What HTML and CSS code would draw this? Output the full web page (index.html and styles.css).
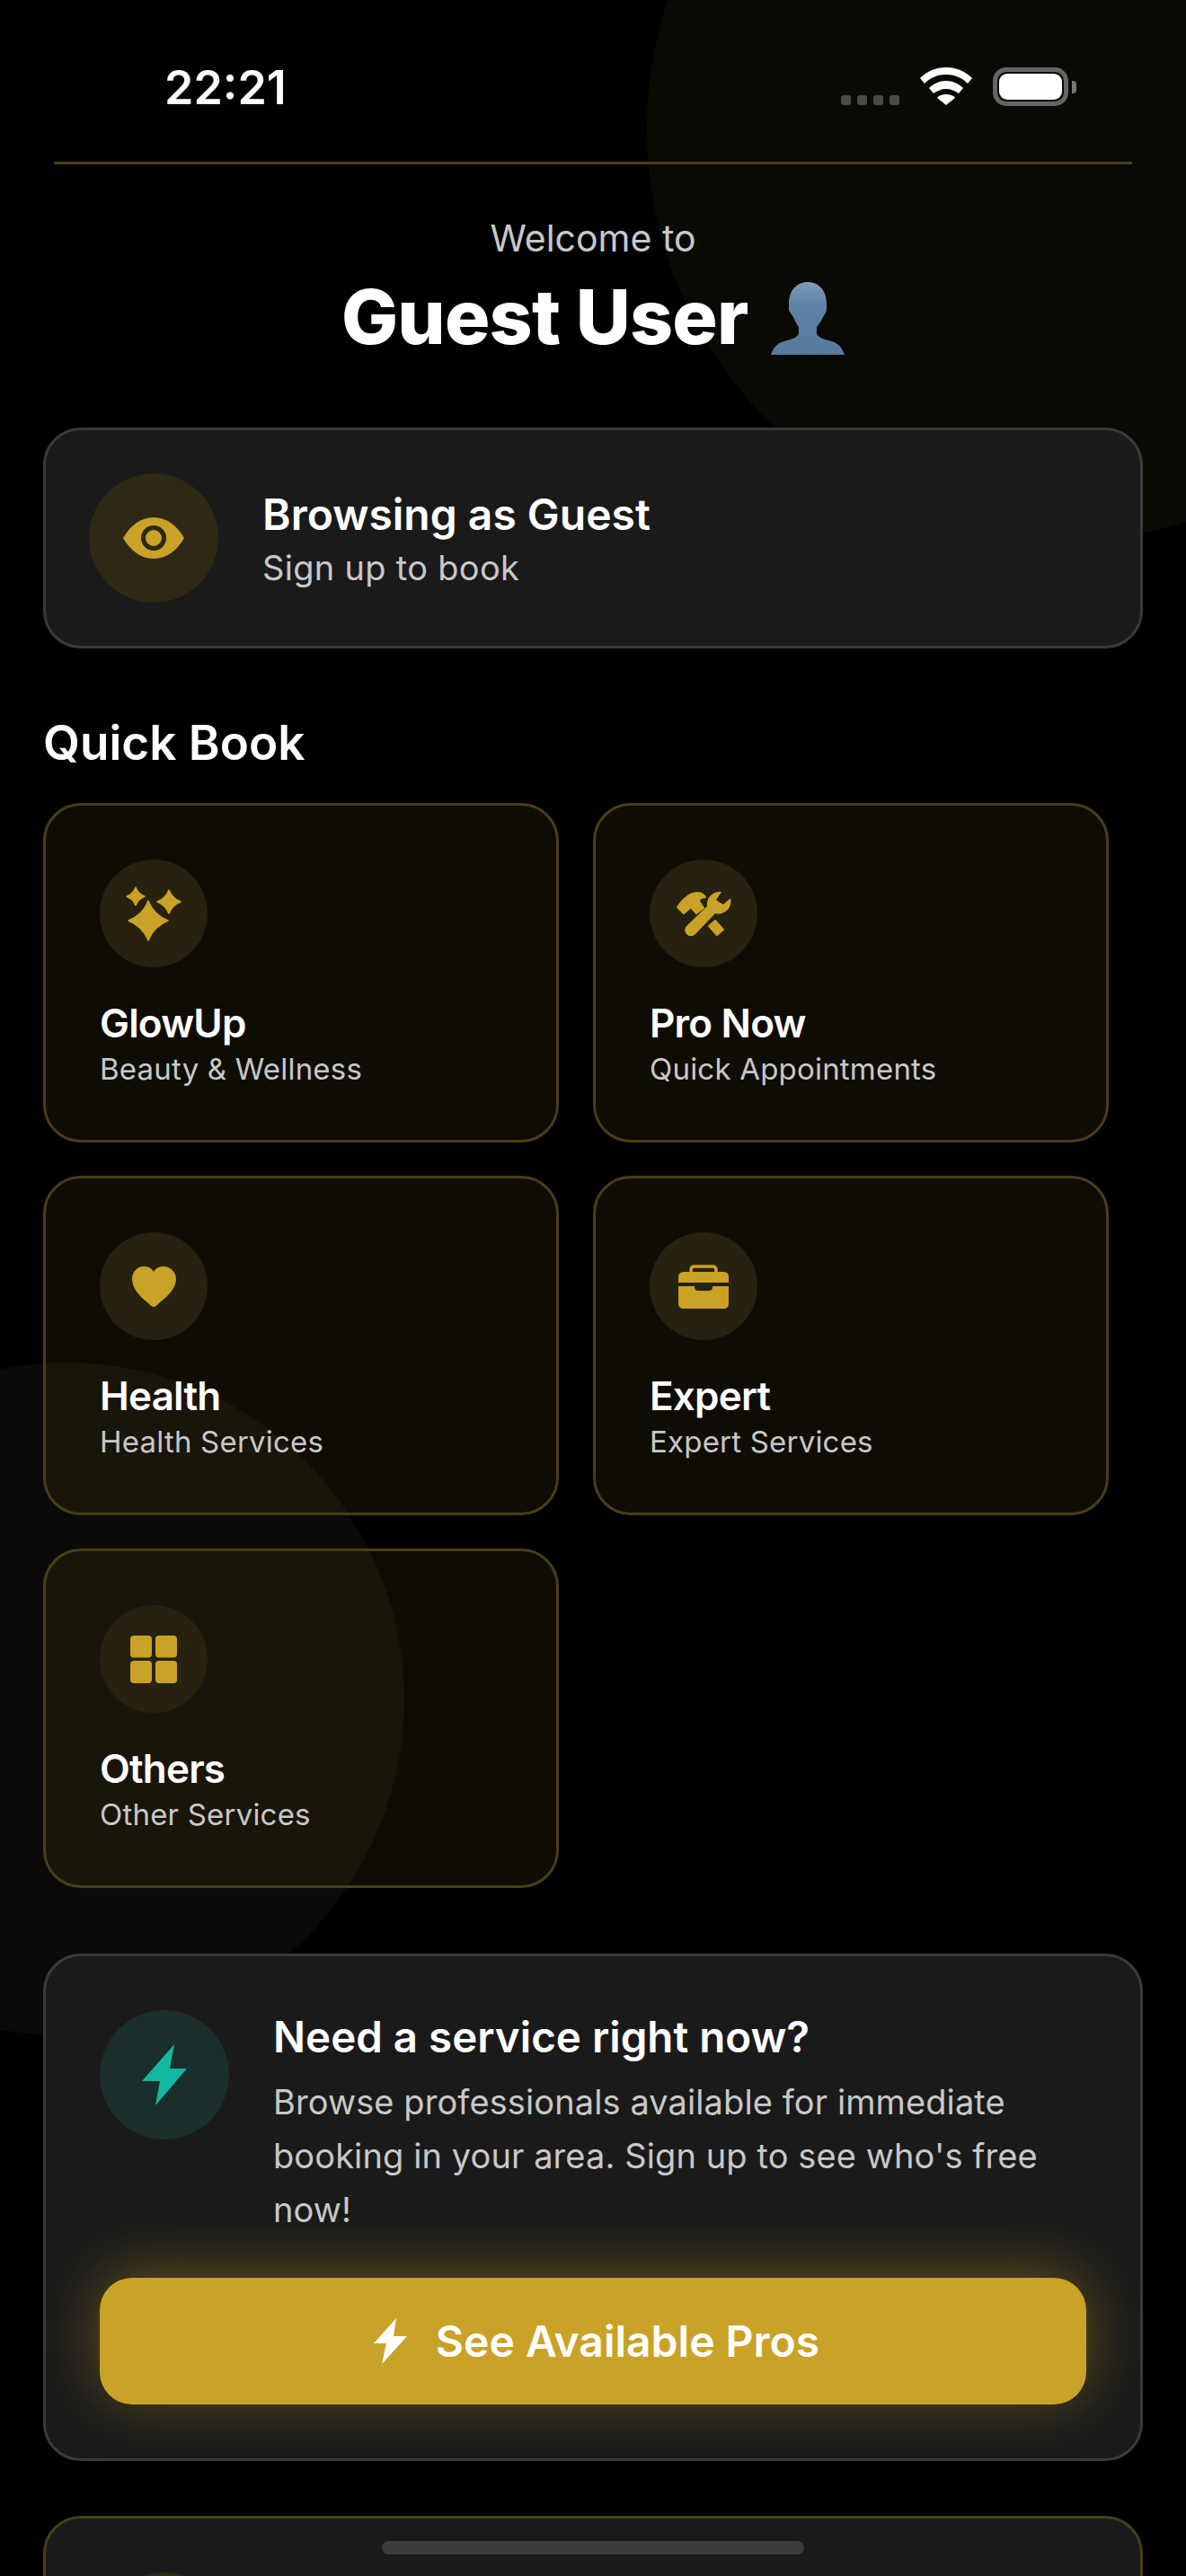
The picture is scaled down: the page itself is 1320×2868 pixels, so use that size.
FILE: index.html
```html
<!DOCTYPE html>
<html lang="en">
<head>
    <meta charset="UTF-8">
    <meta name="viewport" content="width=device-width, initial-scale=1.0">
    <title>Guest User</title>
    <link rel="stylesheet" href="styles.css">
</head>
<body>
    <div class="screen">
        <div class="blob blob-top"></div>
        <div class="blob blob-left"></div>

        <!-- Status bar -->
        <div class="status-bar">
            <span class="time">22:21</span>
            <div class="status-icons">
                <div class="signal"><i></i><i></i><i></i><i></i></div>
                <svg class="wifi" width="58" height="42" viewBox="0 0 58 42">
                    <path fill="#fff" d="M29 0C18 0 8 4 0 12l5 6C12 11 20 8 29 8s17 3 24 10l5-6C50 4 40 0 29 0z"/>
                    <path fill="#fff" d="M29 15c-7 0-14 3-19 8l5 6c4-3 9-5 14-5s10 2 14 5l5-6c-5-5-12-8-19-8z"/>
                    <path fill="#fff" d="M29 30c-4 0-8 1-10 4l10 8 10-8c-2-3-6-4-10-4z"/>
                </svg>
                <div class="battery"><div class="battery-level"></div></div>
                <div class="battery-nub"></div>
            </div>
        </div>

        <div class="welcome">
            <p>Welcome to</p>
            <h1>Guest User
                <svg class="bust" width="82" height="83" viewBox="0 0 82 83">
                    <defs>
                        <linearGradient id="bustFill" x1="0" y1="0" x2="0" y2="1">
                            <stop offset="0" stop-color="#7d9cb8"/>
                            <stop offset="0.3" stop-color="#5f84a8"/>
                            <stop offset="1" stop-color="#567a9c"/>
                        </linearGradient>
                    </defs>
                    <path fill="url(#bustFill)" d="M41 0C29 0 20 9 20 24l0 7c2 5 5 7 6 10 2 5 4 8 5 9l0 7c0 3-5 6-13 8C8 67 3 72 0 81l82 0c-3-9-8-14-18-16-8-2-13-5-13-8l0-7c2-3 5-6 6-9 1-3 4-5 5-10l0-7C62 9 53 0 41 0z"/>
                </svg>
            </h1>
        </div>

        <!-- Guest card -->
        <div class="guest-card">
            <div class="guest-icon">
                <svg width="144" height="144" viewBox="0 0 144 144">
                    <path fill="#c9a227" d="M38 72C46 58 58 49 72 49s26 9 34 23c-8 14-20 23-34 23S46 86 38 72z"/>
                    <circle cx="72" cy="72" r="11.5" fill="none" stroke="#2e2814" stroke-width="5"/>
                </svg>
            </div>
            <div class="guest-text">
                <div class="guest-title">Browsing as Guest</div>
                <div class="guest-sub">Sign up to book</div>
            </div>
        </div>

        <h2 class="section-title">Quick Book</h2>

        <div class="tile-grid">
            <div class="tile">
                <div class="tile-icon">
                    <svg width="120" height="120" viewBox="0 0 120 120" fill="#c9a227" stroke="#c9a227" stroke-width="1.5" stroke-linejoin="round">
                        <path d="M54 46C58.4 57 65 63.6 76 68 65 72.4 58.4 79 54 90 49.6 79 43 72.4 32 68 43 63.6 49.6 57 54 46z"/>
                        <path d="M40 31C42 36 45 39 50 41 45 43 42 46 40 51 38 46 35 43 30 41 35 39 38 36 40 31z"/>
                        <path d="M77 34C79.6 40.5 83.5 44.4 90 47 83.5 49.6 79.6 53.5 77 60 74.4 53.5 70.5 49.6 64 47 70.5 44.4 74.4 40.5 77 34z"/>
                    </svg>
                </div>
                <div class="tile-title">GlowUp</div>
                <div class="tile-sub">Beauty &amp; Wellness</div>
            </div>
            <div class="tile">
                <div class="tile-icon">
                    <svg width="120" height="120" viewBox="0 0 120 120" fill="#c9a227">
                        <path stroke="#c9a227" stroke-width="2" stroke-linejoin="round" d="M31 53Q42 37 53 37 59 37 62 42 56 42 55 46L60 54 52 60 46 53 38 60z"/>
                        <path stroke="#c9a227" stroke-width="2" stroke-linejoin="round" d="M73 68L66 74 75 84 82 78z"/>
                        <path d="M80 36A14 14 0 0 0 64 52L41 74A6.5 6.5 0 0 0 51 83L73 60A14 14 0 0 0 90 43L82 50 74 45z"/>
                    </svg>
                </div>
                <div class="tile-title">Pro Now</div>
                <div class="tile-sub">Quick Appointments</div>
            </div>
            <div class="tile">
                <div class="tile-icon">
                    <svg width="120" height="120" viewBox="0 0 120 120">
                        <path fill="#c9a227" d="M60 83C58 83 56 81 53 78 44 71 36 62 36 52 36 44 42 38 49 38 54 38 58 40 60 44 62 40 66 38 71 38 78 38 85 44 85 52 85 62 76 71 67 78 64 81 62 83 60 83z"/>
                    </svg>
                </div>
                <div class="tile-title">Health</div>
                <div class="tile-sub">Health Services</div>
            </div>
            <div class="tile">
                <div class="tile-icon">
                    <svg width="120" height="120" viewBox="0 0 120 120" fill="#c9a227">
                        <path fill="none" stroke="#c9a227" stroke-width="3.5" d="M46 45V42Q46 38 50 38H70Q74 38 74 42V45"/>
                        <path d="M38 44H82Q88 44 88 50V56H32V50Q32 44 38 44z"/>
                        <path d="M32 60H50V61Q50 65 54 65H66Q70 65 70 61V60H88V79Q88 85 82 85H38Q32 85 32 79z"/>
                    </svg>
                </div>
                <div class="tile-title">Expert</div>
                <div class="tile-sub">Expert Services</div>
            </div>
            <div class="tile">
                <div class="tile-icon">
                    <svg width="120" height="120" viewBox="0 0 120 120" fill="#c9a227">
                        <rect x="34" y="34" width="24" height="24.5" rx="4"/>
                        <rect x="62" y="34" width="24" height="24.5" rx="4"/>
                        <rect x="34" y="62" width="24" height="25" rx="4"/>
                        <rect x="62" y="62" width="24" height="25" rx="4"/>
                    </svg>
                </div>
                <div class="tile-title">Others</div>
                <div class="tile-sub">Other Services</div>
            </div>
        </div>

        <!-- Need a service -->
        <div class="now-card">
            <div class="now-row">
                <div class="now-icon">
                    <svg width="144" height="144" viewBox="0 0 144 144">
                        <path fill="#14b8a0" d="M83 38L47 79H67L62 106 97 65H78z"/>
                    </svg>
                </div>
                <div class="now-text">
                    <div class="now-title">Need a service right now?</div>
                    <p>Browse professionals available for immediate booking in your area. Sign up to see who's free now!</p>
                </div>
            </div>
            <button class="btn-gold">
                <svg width="37" height="51" viewBox="0 0 37 51">
                    <path fill="#fff" d="M25 0L0 28H14L9 51 37 20H22z"/>
                </svg>
                See Available Pros
            </button>
        </div>

        <div class="next-card">
            <div class="next-icon"></div>
        </div>

        <div class="home-bar"></div>
    </div>
</body>
</html>
```

FILE: styles.css
```css
* {
    margin: 0;
    padding: 0;
    box-sizing: border-box;
}

body {
    font-family: Inter, 'Noto Sans', sans-serif;
    background: #000;
    color: #fff;
}

.screen {
    position: relative;
    width: 1320px;
    height: 2868px;
    overflow: hidden;
    padding: 0 48px;
}

.blob {
    position: absolute;
    border-radius: 50%;
}

.blob-top {
    width: 920px;
    height: 920px;
    left: 720px;
    top: -317px;
    background: #0a0904;
}

.blob-left {
    width: 750px;
    height: 750px;
    left: -300px;
    top: 1517px;
    background: #0b0a08;
}

.status-bar,
.welcome,
.guest-card,
.section-title,
.tile-grid,
.now-card,
.next-card {
    position: relative;
}

.status-bar {
    height: 183px;
    margin: 0 12px;
    padding: 0 62px 0 123px;
    border-bottom: 3px solid #4a3d18;
    display: flex;
    justify-content: space-between;
}

.time {
    font-size: 52px;
    font-weight: 600;
    line-height: 62px;
    margin-top: 67px;
}

.status-icons {
    display: flex;
    align-items: flex-start;
    padding-top: 75px;
}

.signal {
    display: flex;
    gap: 7px;
    margin: 31px 23px 0 0;
}

.signal i {
    width: 11px;
    height: 11px;
    border-radius: 3px;
    background: #4a4a4a;
}

.battery {
    width: 84px;
    height: 43px;
    margin-left: 23px;
    padding: 2px;
    border: 5px solid #666;
    border-radius: 15px;
}

.battery-level {
    height: 100%;
    border-radius: 9px;
    background: #fff;
}

.battery-nub {
    width: 5px;
    height: 14px;
    margin: 15px 0 0 4px;
    border-radius: 0 4px 4px 0;
    background: #777;
}

.welcome {
    text-align: center;
    padding-top: 56px;
    height: 293px;
}

.welcome p {
    font-size: 41px;
    line-height: 52px;
    color: #c8c8c8;
}

.welcome h1 {
    font-size: 84px;
    font-weight: 800;
    line-height: 100px;
    margin-top: 12px;
    letter-spacing: -0.8px;
}

.bust {
    vertical-align: -14px;
    margin-left: 8px;
}

.guest-card {
    height: 246px;
    display: flex;
    align-items: center;
    gap: 49px;
    padding: 0 48px;
    background: #1a1a1a;
    border: 3px solid #3a3a3a;
    border-radius: 42px;
}

.guest-icon {
    width: 144px;
    height: 144px;
    border-radius: 50%;
    background: #2e2814;
}

.guest-text {
    padding-top: 4px;
}

.guest-title {
    font-size: 48px;
    font-weight: 600;
    line-height: 62px;
}

.guest-sub {
    font-size: 38px;
    line-height: 56px;
    color: #c8c8c8;
    letter-spacing: 0.3px;
}

.section-title {
    font-size: 53px;
    font-weight: 600;
    line-height: 66px;
    margin: 72px 0 34px;
}

.tile-grid {
    display: grid;
    grid-template-columns: 574px 574px;
    grid-auto-rows: 378px;
    gap: 37px 38px;
}

.tile {
    padding: 60px;
    background: rgba(201, 162, 39, 0.075);
    border: 3px solid #4a3d18;
    border-radius: 42px;
}

.tile-icon {
    width: 120px;
    height: 120px;
    border-radius: 50%;
    background: #272110;
    margin-bottom: 35px;
}

.tile-title {
    font-size: 44px;
    font-weight: 600;
    line-height: 54px;
    letter-spacing: -0.8px;
}

.tile-sub {
    font-size: 33px;
    line-height: 48px;
    color: #c8c8c8;
    letter-spacing: 0.2px;
}

.now-card {
    height: 565px;
    margin-top: 73px;
    padding: 60px;
    background: #1a1a1a;
    border: 3px solid #3a3a3a;
    border-radius: 42px;
}

.now-row {
    display: flex;
    gap: 49px;
}

.now-icon {
    flex: none;
    width: 144px;
    height: 144px;
    border-radius: 50%;
    background: #1a2e2c;
}

.now-title {
    font-size: 47.5px;
    font-weight: 600;
    line-height: 60px;
    margin-bottom: 12px;
}

.now-text p {
    font-size: 38px;
    line-height: 60px;
    color: #c8c8c8;
    letter-spacing: 0.1px;
}

.btn-gold {
    width: 100%;
    height: 141px;
    margin-top: 46px;
    padding-left: 8px;
    display: flex;
    align-items: center;
    justify-content: center;
    gap: 32px;
    background: #c9a227;
    border: none;
    border-radius: 36px;
    box-shadow: 0 -6px 64px rgba(201, 162, 39, 0.42);
    color: #fff;
    font-family: inherit;
    font-size: 48px;
    font-weight: 600;
}

.next-card {
    height: 300px;
    margin-top: 61px;
    padding: 60px;
    background: #1a1a1a;
    border: 3px solid #4a3d18;
    border-radius: 42px;
}

.next-icon {
    width: 144px;
    height: 144px;
    border-radius: 50%;
    background: #2e2814;
}

.home-bar {
    position: absolute;
    left: 425px;
    top: 2829px;
    width: 470px;
    height: 15px;
    border-radius: 8px;
    background: #3c3c3c;
}
```
